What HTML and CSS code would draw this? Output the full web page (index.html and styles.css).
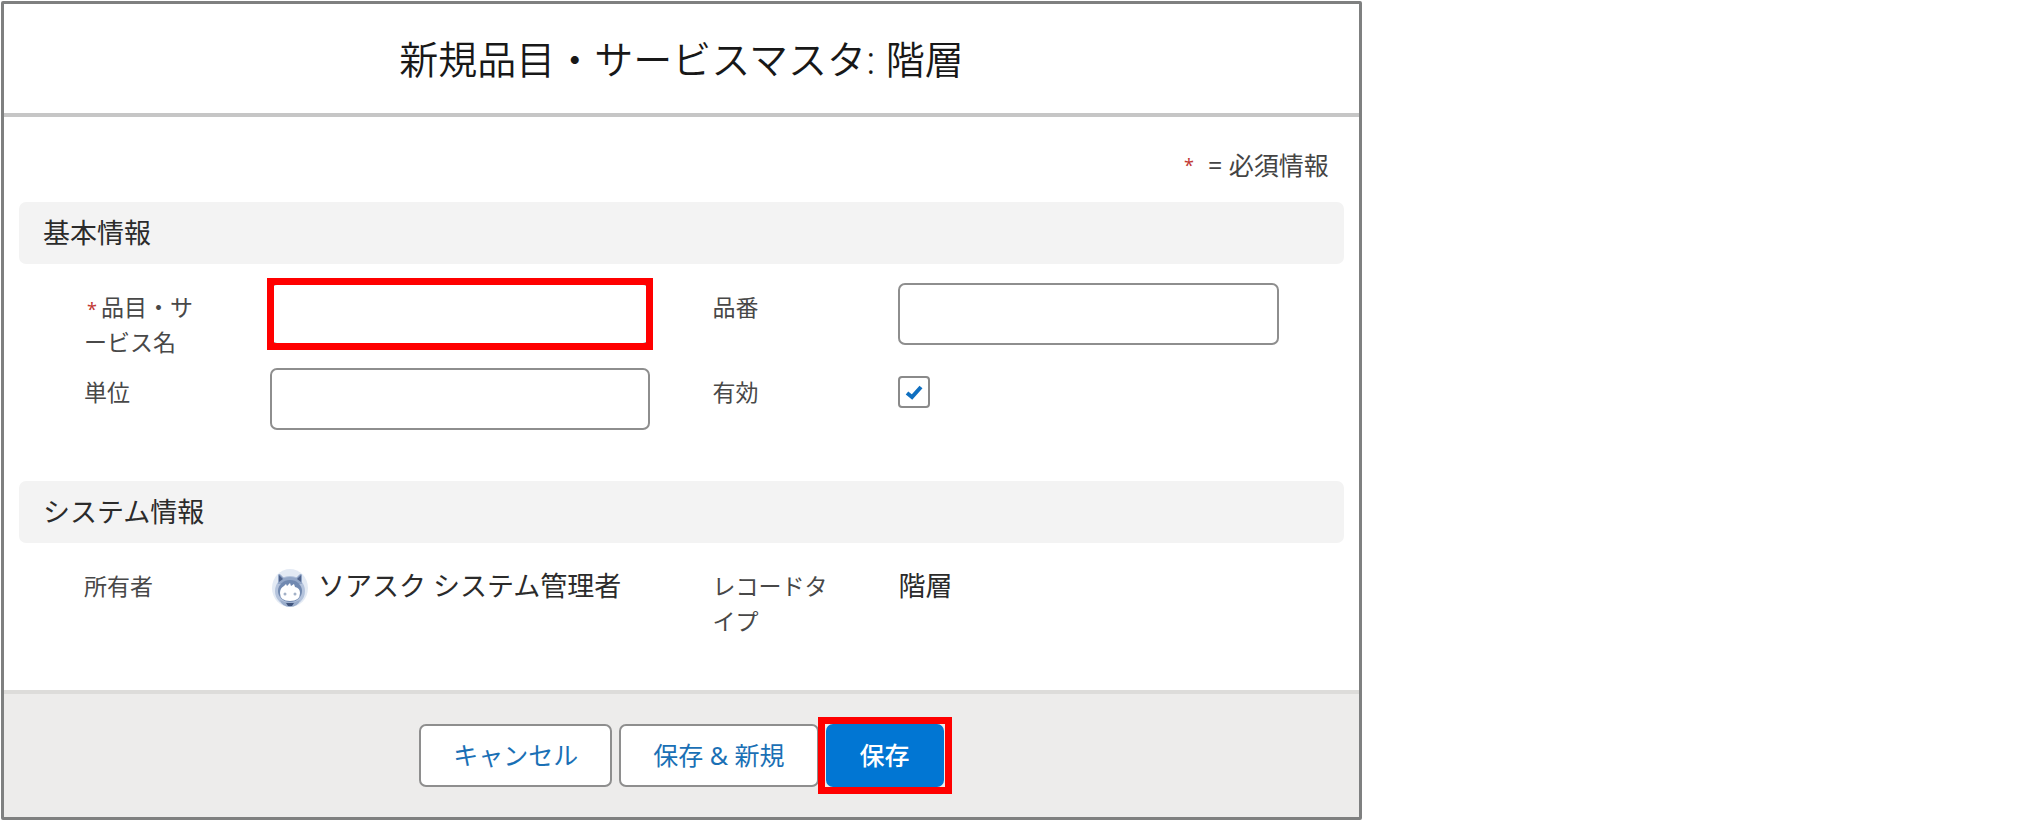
FILE: index.html
```html
<!DOCTYPE html>
<html lang="ja">
<head>
<meta charset="utf-8">
<meta name="viewport" content="width=device-width, initial-scale=1">
<title>新規品目・サービスマスタ: 階層</title>
<link rel="stylesheet" href="styles.css">
</head>
<body>
<form class="modal" aria-labelledby="modal-title">
  <header class="modal-header">
    <h1 class="modal-title" id="modal-title">新規品目・サービスマスタ: 階層</h1>
  </header>
  <div class="modal-body">
    <p class="legend"><span class="required">*</span><span>= 必須情報</span></p>

    <section class="section">
      <h2 class="section-title">基本情報</h2>
      <div class="fields">
        <div class="field">
          <label class="label" for="item-name"><span class="required">*</span>品目・サービス名</label>
          <div class="control highlight highlight-input"><input class="text-input" id="item-name" type="text" required></div>
        </div>
        <div class="field">
          <label class="label" for="item-number">品番</label>
          <div class="control"><input class="text-input" id="item-number" type="text"></div>
        </div>
        <div class="field">
          <label class="label" for="unit">単位</label>
          <div class="control"><input class="text-input" id="unit" type="text"></div>
        </div>
        <div class="field">
          <label class="label" for="active">有効</label>
          <div class="control checkbox">
            <input class="checkbox-input" id="active" type="checkbox" checked>
            <svg class="checkbox-mark" viewBox="0 0 32 32" aria-hidden="true"><path d="M9 17l5 4 9-10"/></svg>
          </div>
        </div>
      </div>
    </section>

    <section class="section">
      <h2 class="section-title">システム情報</h2>
      <div class="fields">
        <div class="field">
          <span class="label">所有者</span>
          <div class="value owner">
            <svg class="avatar" viewBox="0 0 36 38" aria-hidden="true">
              <ellipse cx="18" cy="19" rx="18" ry="19" fill="#e3eaf4"/>
              <ellipse cx="18" cy="22" rx="15" ry="15" fill="#b4c3dc"/>
              <path d="M6 15V6q1-2 3 0l3 3q6-2 12 0l3-3q2-2 3 0v9z" fill="#93a7c8"/>
              <path d="M7 6l4 4-4 3zM29 6l-4 4 4 3z" fill="#4f638b"/>
              <ellipse cx="18" cy="22" rx="12" ry="11" fill="#7189b0"/>
              <path d="M8 24q0-5 4-7l2-2 1 2 3-3 1 3 3-2 1 3q5 1 5 6 0 8-10 8T8 24z" fill="#fff"/>
              <circle cx="13" cy="25" r="1.5" fill="#a3b1c7"/>
              <circle cx="23" cy="25" r="1.5" fill="#a3b1c7"/>
              <path d="M8 31q10 5 20 0-2 7-10 7T8 31z" fill="#9aadcb"/>
              <path d="M14 34h8l-2 3h-4z" fill="#40557c"/>
            </svg>
            <span>ソアスク システム管理者</span>
          </div>
        </div>
        <div class="field">
          <span class="label">レコードタイプ</span>
          <div class="value">階層</div>
        </div>
      </div>
    </section>
  </div>
  <footer class="modal-footer">
    <button class="button" type="button">キャンセル</button>
    <button class="button" type="button">保存 &amp; 新規</button>
    <span class="highlight highlight-button"><button class="button button-brand" type="button">保存</button></span>
  </footer>
</form>
</body>
</html>
```
FILE: styles.css
```css
* {
  box-sizing: border-box;
}

body {
  margin: 0;
  padding: 1px;
  background: #fff;
  color: #2b2b2b;
  font-family: "Noto Sans", "Noto Sans CJK JP", sans-serif;
}

.modal {
  width: 67.2%;
  border: 3px solid #7f8080;
  border-radius: 2px;
  background: #fff;
}

.modal-header {
  padding: 27px 16px;
  border-bottom: 4px solid #c6c6c6;
  text-align: center;
}

.modal-title {
  margin: 0;
  font-size: 39px;
  font-weight: 350;
  line-height: 55px;
  color: #181818;
}

.modal-body {
  padding: 31px 15px 0;
}

.legend {
  display: flex;
  justify-content: flex-end;
  gap: 14px;
  margin: 0 15px 19px;
  font-size: 25px;
  line-height: 35px;
  color: #444;
}

.required {
  color: #c23934;
  font-size: 18px;
}

.section {
  padding-bottom: 51px;
}

.section-title {
  margin: 0;
  padding: 13px 24px 14px;
  border-radius: 7px;
  background: #f3f3f3;
  font-size: 27px;
  font-weight: 400;
  line-height: 35px;
}

.fields {
  display: grid;
  grid-template-columns: 1fr 1fr;
  gap: 8px 62px;
  padding: 19px 65px 0;
}

.field {
  display: grid;
  grid-template-columns: 120px 1fr;
  column-gap: 66px;
  align-items: start;
}

.label {
  padding-top: 7px;
  font-size: 23px;
  line-height: 35px;
  line-break: anywhere;
  color: #484848;
}

.label .required {
  display: inline-block;
  margin: 0 4px 0 3px;
  line-height: 18px;
}

.text-input {
  display: block;
  width: 100%;
  height: 62px;
  padding: 0 20px;
  border: 2px solid #8e8e8e;
  border-radius: 7px;
  background: #fff;
  font: inherit;
  font-size: 25px;
}

.checkbox {
  display: grid;
  justify-content: start;
  padding-top: 8px;
}

.checkbox-input,
.checkbox-mark {
  grid-area: 1 / 1;
  width: 32px;
  height: 32px;
  margin: 0;
}

.checkbox-input {
  appearance: none;
  border: 2px solid #8a8a8a;
  border-radius: 4px;
  background: #fff;
}

.checkbox-mark {
  pointer-events: none;
  visibility: hidden;
  fill: none;
  stroke: #0f6fc0;
  stroke-width: 4;
}

.checkbox-input:checked + .checkbox-mark {
  visibility: visible;
}

.value {
  padding-top: 6px;
  font-size: 27px;
  line-height: 35px;
}

.owner {
  display: flex;
  align-items: flex-start;
  gap: 10px;
  padding-left: 2px;
}

.avatar {
  flex: none;
  width: 36px;
  height: 38px;
  margin-top: 1px;
}

.modal-footer {
  display: flex;
  justify-content: center;
  gap: 7px;
  padding: 30px 16px;
  border-top: 4px solid #dddcda;
  background: #edeceb;
}

.button {
  padding: 12px 32px;
  border: 2px solid #8e8e8e;
  border-radius: 7px;
  background: #fff;
  color: #1a70b5;
  font-family: inherit;
  font-size: 25px;
  line-height: 35px;
}

.button-brand {
  border-color: #0176d3;
  background: #0176d3;
  color: #fff;
  font-weight: 500;
}

/* Red frames that mark the fields to fill in and the button to press */
.highlight {
  position: relative;
}

.highlight::after {
  content: "";
  position: absolute;
  border: 7px solid #f00;
  pointer-events: none;
}

.highlight-input::after {
  inset: -5px -3px;
}

.highlight-button::after {
  inset: -7px -8px;
}
```
